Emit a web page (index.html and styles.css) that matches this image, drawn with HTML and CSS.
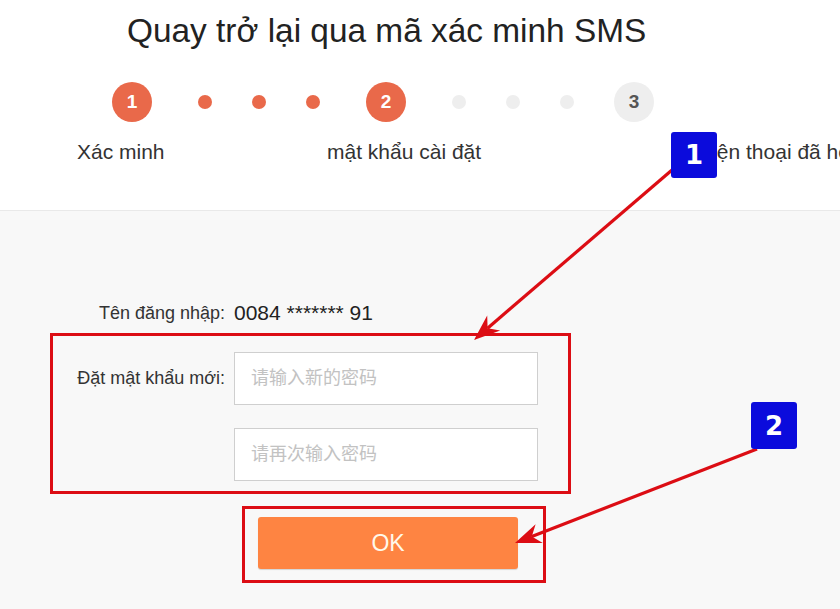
FILE: index.html
```html
<!DOCTYPE html>
<html lang="vi">
<head>
<meta charset="utf-8">
<title>Quay trở lại qua mã xác minh SMS</title>
<link rel="stylesheet" href="styles.css">
</head>
<body>
<div class="page">
  <header class="top">
    <h1 class="title">Quay trở lại qua mã xác minh SMS</h1>
    <div class="steps">
      <span class="step active">1</span>
      <span class="dot active"></span>
      <span class="dot active"></span>
      <span class="dot active"></span>
      <span class="step active">2</span>
      <span class="dot"></span>
      <span class="dot"></span>
      <span class="dot"></span>
      <span class="step last">3</span>
    </div>
    <div class="labels">
      <span class="label l1">Xác minh</span>
      <span class="label l2">mật khẩu cài đặt</span>
      <span class="label l3">Điện thoại đã hoàn thành</span>
    </div>
  </header>

  <main class="form">
    <div class="row user">
      <span class="field-label">Tên đăng nhập:</span>
      <span class="user-value">0084 ******* 91</span>
    </div>
    <div class="highlight pw-box">
      <div class="row">
        <span class="field-label">Đặt mật khẩu mới:</span>
        <input class="input" type="password" placeholder="请输入新的密码">
      </div>
      <div class="row">
        <span class="field-label"></span>
        <input class="input" type="password" placeholder="请再次输入密码">
      </div>
    </div>
    <div class="highlight btn-box">
      <button class="ok" type="button">OK</button>
    </div>
  </main>

  <svg class="arrows" width="840" height="609" viewBox="0 0 840 609" aria-hidden="true">
    <line x1="672" y1="170" x2="487.6" y2="328.2" stroke="#dc0d14" stroke-width="3.2"/>
    <path d="M474 340 L500.2 330.6 L487.6 328.2 L487.2 315.4 Z" fill="#dc0d14"/>
    <line x1="757" y1="449" x2="531.8" y2="536.5" stroke="#dc0d14" stroke-width="3.2"/>
    <path d="M515 543 L542.8 542.9 L531.8 536.5 L535.6 524.3 Z" fill="#dc0d14"/>
  </svg>
  <div class="badge b1">1</div>
  <div class="badge b2">2</div>
</div>
</body>
</html>
```
FILE: styles.css
```css
* { box-sizing: border-box; }
html, body { margin: 0; padding: 0; }
body {
  font-family: "Liberation Sans", Arial, "Noto Sans CJK SC", sans-serif;
  color: #333;
  background: #f8f8f8;
}
.page {
  position: relative;
  width: 840px;
  height: 609px;
  overflow: hidden;
  background: #f8f8f8;
}
.top {
  height: 211px;
  background: #fff;
  border-bottom: 1px solid #e9e9e9;
  padding-top: 14px;
}
.title {
  margin: 0;
  padding-left: 127px;
  font-size: 33.4px;
  line-height: 33px;
  font-weight: normal;
  color: #222;
  white-space: nowrap;
}
.steps {
  display: flex;
  align-items: center;
  gap: 40px;
  margin-top: 35px;
  padding-left: 112px;
  height: 40px;
}
.step {
  width: 40px;
  height: 40px;
  border-radius: 50%;
  background: #eeeeee;
  color: #555;
  font-size: 19px;
  font-weight: bold;
  display: flex;
  align-items: center;
  justify-content: center;
  margin: 0 6px;
  flex: none;
}
.step:first-child { margin-left: 0; }
.step.last { margin-left: 0; }
.step.active { background: #e9694a; color: #fff; }
.dot {
  width: 14px;
  height: 14px;
  border-radius: 50%;
  background: #eeeeee;
  flex: none;
}
.dot.active { background: #e9694a; }
.labels {
  display: flex;
  margin-top: 18px;
  padding-left: 77px;
  font-size: 21px;
  line-height: 24px;
  color: #333;
  white-space: nowrap;
}
.label { flex: none; }
.l1 { width: 250px; }
.l2 { width: 370px; }

.form {
  padding-top: 90px;
  margin-left: 50px;
  width: 521px;
}
.row {
  display: flex;
  align-items: center;
  gap: 9px;
}
.field-label {
  width: 175px;
  text-align: right;
  font-size: 18px;
  color: #333;
  white-space: nowrap;
  flex: none;
}
.user { height: 24px; line-height: 24px; }
.user-value {
  font-size: 21px;
  color: #222;
}
.highlight {
  border: 3px solid #dc0d14;
}
.pw-box {
  margin-top: 8px;
  padding: 16px 30px 10px 0;
  display: flex;
  flex-direction: column;
  gap: 23px;
}
.pw-box .field-label { width: 172px; }
.input {
  width: 304px;
  height: 53px;
  border: 1px solid #cfcfcf;
  background: #fff;
  padding: 0 0 0 16px;
  font-family: "Liberation Sans", "Noto Sans CJK SC", sans-serif;
  font-size: 18px;
  outline: none;
}
.input::placeholder { color: #c2c2c2; }
.btn-box {
  margin-top: 12px;
  margin-left: 192px;
  width: 304px;
  padding: 8px 25px 11px 13px;
}
.ok {
  display: block;
  width: 260px;
  height: 52px;
  border: none;
  border-radius: 3px;
  background: #fe8442;
  color: #fff8ea;
  font-family: "Liberation Sans", Arial, sans-serif;
  font-size: 23px;
  box-shadow: 0 1px 1px rgba(0,0,0,0.15);
}
.arrows {
  position: absolute;
  left: 0;
  top: 0;
  pointer-events: none;
}
.badge {
  position: absolute;
  width: 46px;
  height: 46px;
  border-radius: 3px;
  background: #0b0bdc;
  color: #fff;
  font-family: "DejaVu Sans", "Liberation Sans", sans-serif;
  font-weight: bold;
  font-size: 26px;
  display: flex;
  align-items: center;
  justify-content: center;
}
.b1 { left: 671px; top: 132px; }
.b2 { left: 751px; top: 402px; height: 47px; }
```
